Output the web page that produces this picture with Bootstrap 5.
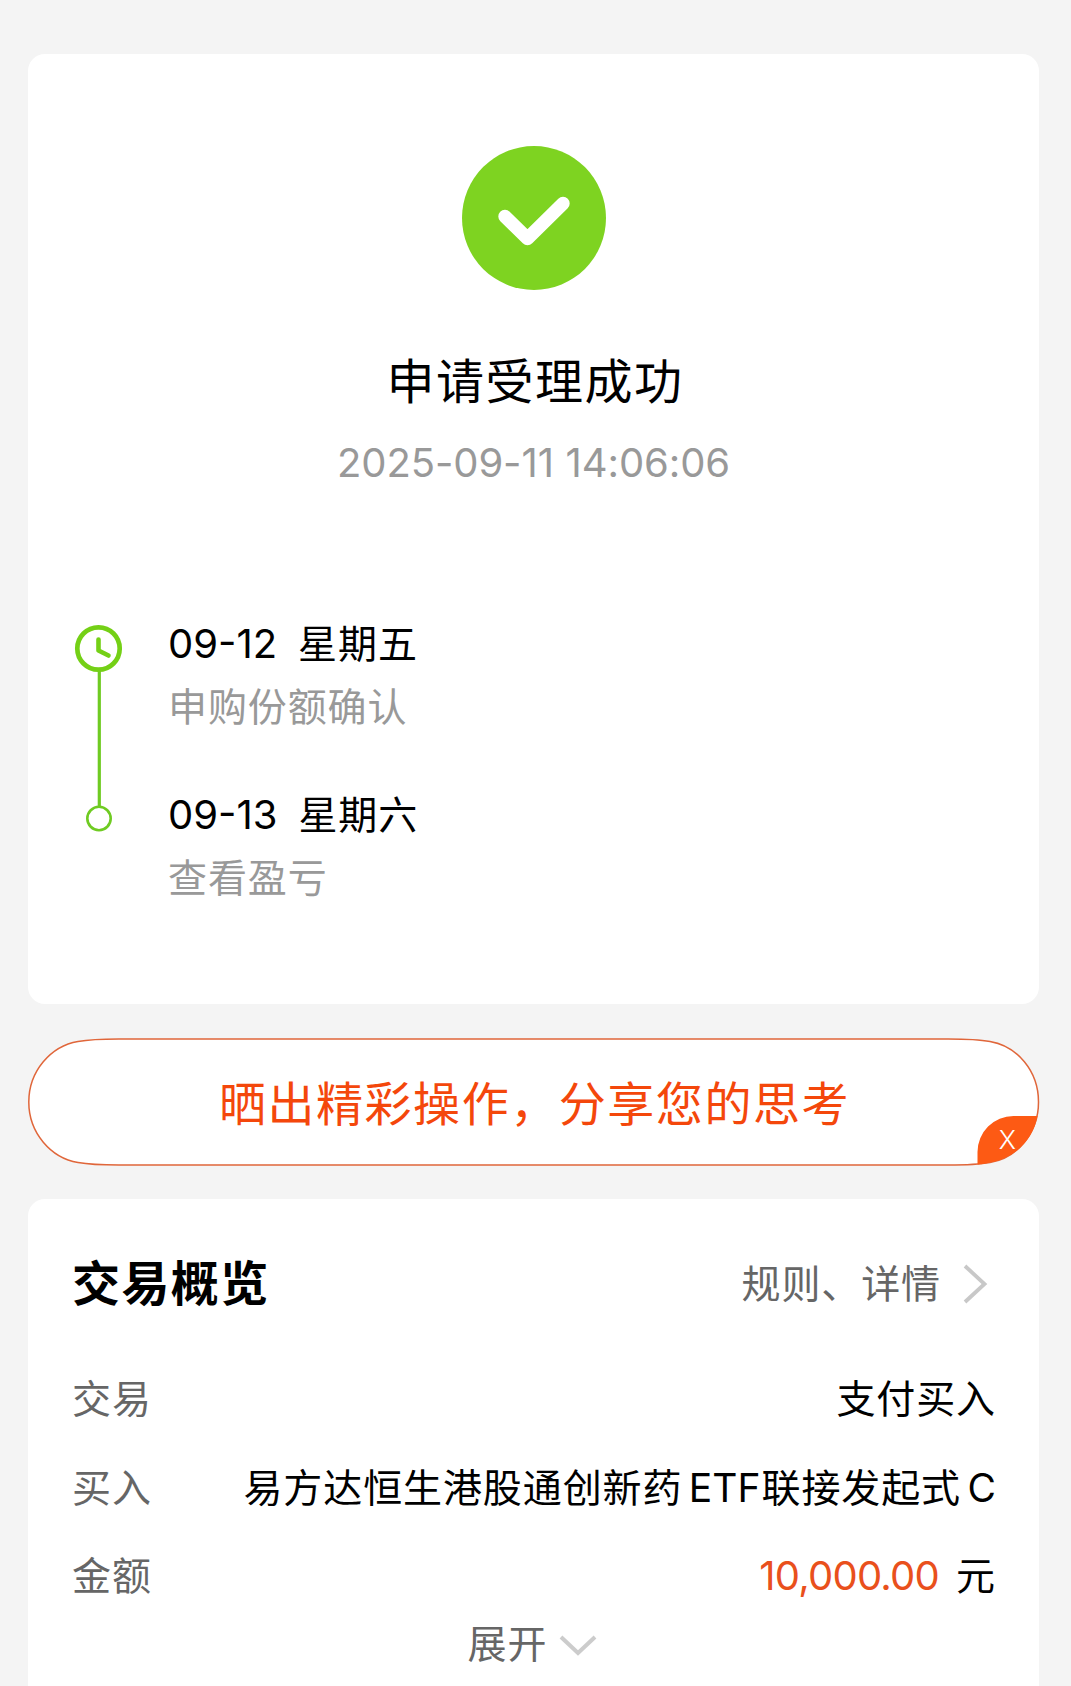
<!DOCTYPE html>
<html lang="zh-CN">
<head>
<meta charset="utf-8">
<meta name="viewport" content="width=device-width, initial-scale=1">
<title>申请受理成功</title>
<link rel="stylesheet" href="https://cdn.jsdelivr.net/npm/bootstrap@5.3.0/dist/css/bootstrap.min.css">
<style>
body{background:#f4f4f4;color:#000;font-family:Inter,"Noto Sans CJK SC",sans-serif;font-size:39px;line-height:56px;letter-spacing:.9px;height:1686px;overflow:hidden}
.page{padding:53.5px 32px 0 28px}
.panel{background:#fff;border-radius:17px;border:0}
.result{height:950.5px;padding:92.5px 45px 0}
.result-title{font-size:48px;line-height:64px;letter-spacing:1.5px;margin-top:58px;padding-left:3px}
.result-time{font-size:40px;color:#999;letter-spacing:-.08px;word-spacing:.5px;margin-top:21px;line-height:56px}
.steps{margin-top:125px}
.rail{width:54px}
.step-text{padding-left:41px}
.num{font-size:40px;letter-spacing:0}
.day{margin-left:21px}
.muted{color:#999}
.step-sub{margin-top:7px}
.step+.step{margin-top:52px}
.step{height:119px}
.share{height:130px;margin-top:33px;color:#f4470b;font-size:47px;letter-spacing:1.55px}
.share-label{top:2px;left:1px}
.share-shape{left:0;top:0}
.share-x{right:23px;bottom:8px;font-size:26px;line-height:38px;letter-spacing:0;color:#fff;font-weight:300}
.overview{height:520px;margin-top:32px;padding:53px 43px 0 44px}
.ov-title{font-size:48px;line-height:64px;font-weight:700;letter-spacing:1.4px}
.ov-link{gap:11px}
.ov-link svg{margin-top:-2px}
.grey{color:#666}
.line-row{height:56px}
.amount{color:#e9501c;letter-spacing:-.75px}
.row-kind{margin-top:55px}
.row-fund{margin-top:33px}
.row-sum{margin-top:32px}
.latin{letter-spacing:0}
.latin-gap{margin-left:6.5px}
.latin-end{margin-right:1px}
.yuan{margin-left:17px}
.expand{margin-top:12px;gap:11px;padding-right:2px}
</style>
<script src="https://cdn.jsdelivr.net/npm/bootstrap@5.3.0/dist/js/bootstrap.bundle.min.js"></script>
</head>
<body>
<main class="page">
  <section class="card panel result">
    <div class="text-center d-flex flex-column align-items-center">
      <svg width="146" height="146" viewBox="0 0 146 146"><circle cx="73" cy="72" r="72" fill="#7ed321"/><path d="M44 70.500l22.500 22 35.500-35" fill="none" stroke="#fff" stroke-width="13.400" stroke-linecap="round" stroke-linejoin="round"/></svg>
      <div class="result-title">申请受理成功</div>
      <div class="result-time">2025-09-11 14:06:06</div>
    </div>
    <div class="steps d-flex">
      <svg class="rail flex-shrink-0" width="54" height="230" viewBox="0 0 54 230" fill="none" stroke="#6fcb22">
        <path d="M26.300 55V190" stroke-width="3.200"/>
        <circle cx="25.500" cy="32.500" r="21.200" stroke-width="4.700" stroke="#74d016"/>
        <path d="M25.500 23.500v11l10 5" stroke-width="4.600" stroke-linecap="round" stroke-linejoin="round" stroke="#74d016"/>
        <circle cx="26" cy="202.500" r="11.700" stroke-width="2.600"/>
      </svg>
      <div class="step-text">
        <div class="step"><div class="d-flex"><span class="num">09-12</span><span class="day">星期五</span></div><div class="step-sub muted">申购份额确认</div></div>
        <div class="step"><div class="d-flex"><span class="num">09-13</span><span class="day">星期六</span></div><div class="step-sub muted">查看盈亏</div></div>
      </div>
    </div>
  </section>

  <section class="share position-relative d-flex align-items-center justify-content-center">
    <svg class="share-shape position-absolute" width="1012" height="130" viewBox="0 0 1012 130">
      <path d="M91 2H920C942 2 950 2.300 962 4.500C989 9 1010.500 34 1010.500 65C1010.500 96 989 121 962 125.500C950 127.700 942 128 920 128H91C70 128 62 127.700 50 125.500C23 121 .8 96 .8 65C.8 34 23 9 50 4.500C62 2.300 70 2 91 2Z" fill="#fff" stroke="#e0663a" stroke-width="1.500"/>
      <path d="M949.500 127.500V115A36 36 0 0 1 985.500 79H1009.500C1005 103 987 121 962 125.500C956 127 953 127.300 949.500 127.500Z" fill="#fd5a14"/>
    </svg>
    <span class="share-label position-relative">晒出精彩操作，分享您的思考</span>
    <span class="share-x position-absolute">X</span>
  </section>

  <section class="card panel overview">
    <div class="d-flex justify-content-between align-items-center">
      <span class="ov-title">交易概览</span>
      <span class="ov-link grey d-flex align-items-center">规则、详情
        <svg width="44" height="44" viewBox="0 0 44 44" fill="none" stroke="#c8c8c8" stroke-width="3.800"><path d="M13 5l19.500 18-19.500 18"/></svg>
      </span>
    </div>
    <div class="line-row row-kind d-flex justify-content-between"><span class="grey">交易</span><span>支付买入</span></div>
    <div class="line-row row-fund d-flex justify-content-between"><span class="grey">买入</span><span>易方达恒生港股通创新药<span class="latin latin-gap latin-end">ETF</span>联接发起式<span class="latin latin-gap">C</span></span></div>
    <div class="line-row row-sum d-flex justify-content-between"><span class="grey">金额</span><span><span class="num amount">10,000.00</span><span class="yuan">元</span></span></div>
    <div class="expand grey d-flex justify-content-center align-items-center">展开
      <svg width="40" height="30" viewBox="0 0 40 30" fill="none" stroke="#ccc" stroke-width="4"><path d="M3 8l17 16 17-16"/></svg>
    </div>
  </section>
</main>
</body>
</html>
